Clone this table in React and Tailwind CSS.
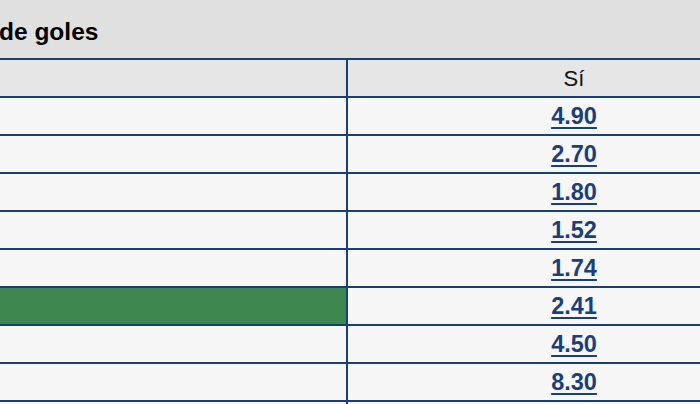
import React from "react";

const rows = [
    { odd: "4.90" },
    { odd: "2.70" },
    { odd: "1.80" },
    { odd: "1.52" },
    { odd: "1.74" },
    { odd: "2.41", win: true },
    { odd: "4.50" },
    { odd: "8.30" },
    { odd: "" },
];

const App = () => {
    return (
        <div className="w-[700px] h-[404px] overflow-hidden bg-[#e0e0e0] font-['Liberation_Sans',Arial,sans-serif]">
            <div className="h-[58px] flex items-start pt-[18px]">
                <h2 className="ml-[-1px] text-[24.5px] leading-[28px] font-bold text-black whitespace-nowrap">de goles</h2>
            </div>
            <div className="w-[800px] border-t-2 border-[#1a3e78]">
                <div className="flex h-[38px] bg-[#e6e6e6] border-b-2 border-[#1a3e78]">
                    <div className="w-[348px] border-r-2 border-[#1a3e78]"></div>
                    <div className="flex-1 flex items-center justify-center text-[22px] text-[#111]">Sí</div>
                </div>
                {rows.map((row, i) => (
                    <div key={i} className="flex h-[38px] bg-[#f7f7f7] border-b-2 border-[#1a3e78]">
                        <div className={row.win ? "w-[348px] border-r-2 border-[#1a3e78] bg-[#3e874f]" : "w-[348px] border-r-2 border-[#1a3e78]"}></div>
                        <div className="flex-1 flex items-center justify-center">
                            <a href="#" className="text-[23.5px] leading-[28px] font-bold text-[#1b3f7a] underline underline-offset-[3px] decoration-2">{row.odd}</a>
                        </div>
                    </div>
                ))}
            </div>
        </div>
    );
};

export default App;
